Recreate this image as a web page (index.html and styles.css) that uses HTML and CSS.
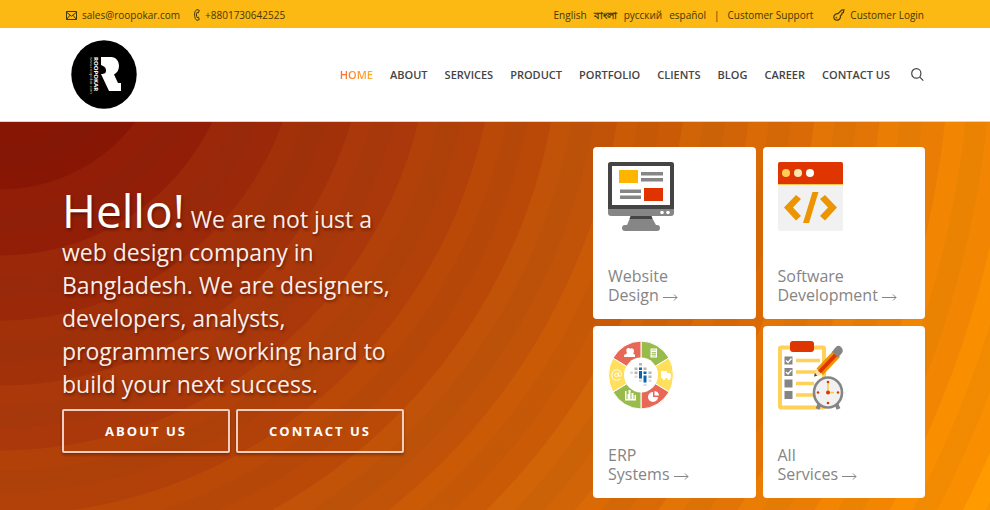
FILE: index.html
```html
<!DOCTYPE html>
<html lang="en">
<head>
<meta charset="utf-8">
<meta name="viewport" content="width=device-width, initial-scale=1">
<title>Roopokar</title>
<link rel="stylesheet" href="styles.css">
</head>
<body>
<div class="topbar">
  <div class="contacts">
    <a href="mailto:sales@roopokar.com">
      <svg width="11" height="9" viewBox="0 0 11 9" fill="none" stroke="currentColor"><path d="M.5.5h10v8H.5zM.5 1.200l5 4 5-4M.8 8.200l3.200-4M10.200 8.200 7 4.200"/></svg>
      sales@roopokar.com
    </a>
    <a href="tel:+8801730642525">
      <svg width="6" height="12" viewBox="0 0 6 12" fill="none" stroke="currentColor"><path d="M3 .6C1 1.400.5 3.500.6 6c.1 2.500.8 4.600 2.400 5.400l2.200-.7L4.600 8.200l-1.500.3C2.300 7 2.200 5 2.900 3.500l1.500.3L5.300 1.300z"/></svg>
      +8801730642525
    </a>
  </div>
  <div class="top-links">
    <div class="languages">
      <a href="#en">English</a>
      <a class="bengali" lang="bn" href="#bn">বাংলা</a>
      <a lang="ru" href="#ru">русский</a>
      <a lang="es" href="#es">español</a>
    </div>
    <span class="divider">|</span>
    <a href="#support">Customer Support</a>
    <a class="login" href="#login">
      <svg width="12" height="12" viewBox="0 0 12 12" fill="none" stroke="currentColor" stroke-width="1.200"><path d="M10.900.8 8.800 1 5 4.600C3.200 4.200.7 6 .8 8.300c.1 2 1.500 3 3.200 2.900 2.200-.1 3.900-2.300 3.400-4.300l1.500-1.700.2-1.300 1.300-.3zM2.800 9.200l1-1"/></svg>
      Customer Login
    </a>
  </div>
</div>

<header class="header">
  <a class="logo" href="#home" aria-label="Roopokar">
    <svg width="66" height="69" viewBox="0 0 66 69">
      <ellipse cx="33" cy="34.500" rx="32.700" ry="34.300" fill="#000"/>
      <path fill="#fff" d="M30 17h10c5 0 8 4 8 9 0 4-2 7-5 8.500L47 43h3v8H38l-8-17c4 0 5-1 5-3.500S34 27 32 26l-2-1z"/>
      <g transform="translate(22.500 17) rotate(90)"><text class="logo-name" x="0" y="0">ROOPOKAR</text><text class="logo-url" x="0" y="4">www.roopokar.com</text></g>
    </svg>
  </a>
  <nav class="nav">
    <a class="active" href="#home">HOME</a>
    <a href="#about">ABOUT</a>
    <a href="#services">SERVICES</a>
    <a href="#product">PRODUCT</a>
    <a href="#portfolio">PORTFOLIO</a>
    <a href="#clients">CLIENTS</a>
    <a href="#blog">BLOG</a>
    <a href="#career">CAREER</a>
    <a href="#contact">CONTACT US</a>
    <button class="search" type="button" aria-label="Search">
      <svg width="13" height="13" viewBox="0 0 13 13" fill="none" stroke="currentColor" stroke-width="1.200"><ellipse cx="5.300" cy="5.400" rx="4.600" ry="4.800"/><path d="m8.600 8.900 3.700 3.700"/></svg>
    </button>
  </nav>
</header>

<main class="hero">
  <section class="intro">
    <h1><span class="hello">Hello!</span> We are not just a<br>web design company in<br>Bangladesh. We are designers,<br>developers, analysts,<br>programmers working hard to<br>build your next success.</h1>
    <div class="actions">
      <a class="btn" href="#about">ABOUT US</a>
      <a class="btn" href="#contact">CONTACT US</a>
    </div>
  </section>

  <section class="cards">
    <a class="card" href="#web">
      <svg width="66" height="69" viewBox="0 0 66 69">
        <rect width="66" height="54" rx="3" fill="#868686"/><path d="M0 47V3q0-3 3-3h60q3 0 3 3v44z" fill="#444"/><path d="M4 4h58v39H4z" fill="#fff"/>
        <path d="M11 8h19v13H11z" fill="#ffb400"/><path d="M36 26h19v13H36z" fill="#e03400"/>
        <path d="M33 10h22v3.500H33zM33 16h22v3.500H33zM12 27.500h21V31H12zM12 33.500h21V37H12zM23 54h20l5 9h1q3 0 3 3t-3 3H17q-3 0-3-3t3-3h2z" fill="#868686"/><path d="M22.500 54h21l1 3h-23z" fill="#444"/>
        <circle cx="54" cy="50.500" r="1.800" fill="#fff"/><circle cx="60" cy="50.500" r="1.800" fill="#fff"/>
      </svg>
      <h2>Website<br>Design <span class="arrow"><svg width="15" height="8" viewBox="0 0 15 8" fill="none" stroke="currentColor"><path d="M0 4.500h14M11 1.500l3 3-3 3"/></svg></span></h2>
    </a>
    <a class="card" href="#software">
      <svg width="66" height="69" viewBox="0 0 66 69">
        <rect width="65" height="69" rx="2" fill="#f1f1f1"/><path d="M0 22V2q0-2 2-2h61q2 0 2 2v20z" fill="#df3500"/><path d="M0 22h65v1H0z" fill="#ffc64c"/>
        <circle cx="8" cy="11" r="4" fill="#ffcd56"/><circle cx="20" cy="11" r="4" fill="#ffe6af"/><circle cx="32" cy="11" r="4" fill="#fff"/>
        <path d="m18 33 5 4-8 8.500 8 8.500-5 4.500L6 45.500zM47 33l-5 4 8 8.500-8 8.500 5 4.500 12-13zM34.500 30h6L31 61h-6z" fill="#ec9500"/>
      </svg>
      <h2>Software<br>Development <span class="arrow"><svg width="15" height="8" viewBox="0 0 15 8" fill="none" stroke="currentColor"><path d="M0 4.500h14M11 1.500l3 3-3 3"/></svg></span></h2>
    </a>
    <a class="card" href="#erp">
      <svg width="66" height="69" viewBox="0 0 66 69">
        <g stroke="#fff" stroke-width="1">
          <path d="M33 34V0A33 34 0 0 1 61 17z" fill="#98bb4b"/><path d="M33 34 61 17a33 34 0 0 1 0 34z" fill="#ffdf5c"/><path d="M33 34 61 51A33 34 0 0 1 33 68z" fill="#e86857"/>
          <path d="M33 34v34A33 34 0 0 1 5 51z" fill="#98bb4b"/><path d="M33 34 5 51a33 34 0 0 1 0-34z" fill="#ffdf5c"/><path d="M33 34 5 17A33 34 0 0 1 33 0z" fill="#e86857"/>
        </g>
        <ellipse cx="33" cy="34" rx="17" ry="17.500" fill="#fff"/>
        <g fill="#fff"><path d="M16 16v-2l3.200-1.800C17.500 9.500 18.500 7 20.500 7q1 0 1.500.7c1.500-1.200 4-.4 4 2.300q0 1.500-.9 2.500l1.900 1.300V16z"/><path d="M42.500 7.500h6.500v9h-6.500zM53 30h6v7h-6zM59 32h3l1 2v3h-4zM17 50h1.500v8H28v1.500H17zM19.500 53h2v5h-2zM20.500 49h2v9h-2zM23.500 52h2v6h-2zM26.500 54h1.500v4h-1.500z"/><circle cx="56" cy="37.500" r="1.500"/><circle cx="61" cy="37.500" r="1.500"/><path d="M45 51v5h5a5 5 0 1 1-5-5zM46.500 50a5 5 0 0 1 4.500 4.500h-4.500z"/></g>
        <path d="M43.500 9h4.500M43.500 11.500h4.500M43.500 13.500h4.500M45 11v5M47 11v5" stroke="#98bb4b" stroke-width=".7"/>
        <g fill="none" stroke="#fff"><circle cx="8.500" cy="34" r="1.800"/><path d="M10.500 31.500v3.500q2.800 1 3-1.500C13 27 4 27.500 3.800 34c0 6 5.500 6 8.500 4"/></g>
        <g fill="#0c64ae"><path d="M31 26.500h3V29h-3zM31 30h3v7.500h-3zM35.500 30.500h3V33h-3zM35.500 34.500h3v7h-3z"/></g>
        <path d="M31 22h3v2.500h-3zM26.500 26.500h3V29h-3zM26.500 30.500h3V33h-3zM35.500 26.500h3V29h-3zM40.500 30.500h3V33h-3zM40.500 34.500h3V37h-3z" fill="#b5b5b5"/><path d="M22 30.500h3V33h-3zM26.500 34.500h3V37h-3zM31 38.500h3V41h-3zM40.500 38.500h3V41h-3zM35.500 43h3v2h-3z" fill="#ddd"/>
      </svg>
      <h2>ERP<br>Systems <span class="arrow"><svg width="15" height="8" viewBox="0 0 15 8" fill="none" stroke="currentColor"><path d="M0 4.500h14M11 1.500l3 3-3 3"/></svg></span></h2>
    </a>
    <a class="card" href="#all">
      <svg width="66" height="69" viewBox="0 0 66 69">
        <rect x="2" y="6.500" width="44" height="60" rx="1" fill="#fff" stroke="#ffd05a" stroke-width="4"/><rect x="12" y="0" width="24" height="11" rx="3" fill="#df3500"/>
        <path d="M6.500 15.500h8v8h-8zM6.500 27h8v8h-8zM6.500 38.500h8v8h-8zM6.500 50h8v8h-8z" fill="#858585"/><path d="m8 19.500 2 2 3.500-4M8 31l2 2 3.500-4" fill="none" stroke="#fff" stroke-width="1.400"/>
        <path d="M18 19.500h24M18 31h22M18 42.500h18M18 54h18" stroke="#ffd05a" stroke-width="3.500"/>
        <path d="m38.500 27.500 6.500 6.500-9 1.500z" fill="#ffe2a0"/><path d="m37 32 2.200 2.800L36 35.500z" fill="#444"/>
        <path d="m38.500 27.500 17-18L62 16 45 34z" fill="#ec9500"/><path d="m41.500 31 17-18" stroke="#df3500" stroke-width="4"/><path d="m54 11 3-4q3-4 6-1t1 6l-4 4.500z" fill="#858585"/>
        <path d="m42 62-2.500 6M58 62l2.500 6" stroke="#858585" stroke-width="4"/><ellipse cx="50" cy="51.500" rx="14" ry="15" fill="#f1f1f1" stroke="#858585" stroke-width="2.600"/><path d="M50 42v9.500h6" fill="none" stroke="#ffc64c" stroke-width="1.500"/>
        <g fill="#df3500"><circle cx="50" cy="51.500" r="2"/><circle cx="50" cy="41" r="1.300"/><circle cx="50" cy="62" r="1.300"/><circle cx="40" cy="51.500" r="1.200"/><circle cx="60" cy="51.500" r="1.200"/></g>
      </svg>
      <h2>All<br>Services <span class="arrow"><svg width="15" height="8" viewBox="0 0 15 8" fill="none" stroke="currentColor"><path d="M0 4.500h14M11 1.500l3 3-3 3"/></svg></span></h2>
    </a>
  </section>
</main>
</body>
</html>
```
FILE: styles.css
```css
* {
  box-sizing: border-box;
}

body {
  display: flex;
  flex-direction: column;
  min-height: 100vh;
  margin: 0;
  background: #fff;
  font-family: "Open Sans", "Noto Sans", sans-serif;
}

a {
  color: inherit;
  text-decoration: none;
}

svg {
  display: block;
  flex: none;
}

.topbar {
  display: flex;
  align-items: center;
  justify-content: space-between;
  height: 28px;
  padding: 2px 66px 0;
  background: #fcb813;
  color: #443709;
  font-size: 10px;
  line-height: 14px;
  white-space: nowrap;
}

.contacts,
.contacts a,
.top-links,
.languages,
.login {
  display: flex;
  align-items: center;
}

.contacts {
  gap: 14px;
}

.contacts a,
.login {
  gap: 5px;
}

.languages {
  gap: 7px;
}

.top-links {
  gap: 8px;
}

.bengali {
  font-weight: 600;
}

.login {
  margin-left: 12px;
}

.header {
  display: flex;
  align-items: center;
  justify-content: space-between;
  height: 94px;
  padding: 0 66px 0 71px;
  border-bottom: 1px solid #d9d5d5;
}

.logo-name {
  fill: #fff;
  font: bold 6px "Open Sans", sans-serif;
}

.logo-url {
  fill: #bbb;
  font: 4px "Open Sans", sans-serif;
}

.nav {
  display: flex;
  align-items: center;
  gap: 17px;
  color: #444;
  font-size: 11px;
  font-weight: 600;
  line-height: 14px;
  white-space: nowrap;
}

.active {
  background: linear-gradient(90deg, #ff6a2b, #ffb02b);
  background-clip: text;
  color: transparent;
}

.search {
  margin-left: 4px;
  padding: 0;
  border: 0;
  background: none;
  color: #444;
}

.hero {
  display: flex;
  flex: 1;
  align-items: flex-start;
  justify-content: space-between;
  padding: 25px 65px 12px 62px;
  background:
    repeating-radial-gradient(circle at 0 -102px, rgba(60, 50, 0, 0.04) 0 17px, transparent 18px 60px, rgba(60, 50, 0, 0.04) 61px 65px),
    radial-gradient(circle at 0 -102px,
      #871605 169px, #921e08 170px 235px, #9b2809 236px 300px,
      #a2310a 301px 365px, #aa380a 366px 430px, #b24109 431px 495px,
      #ba4908 496px 560px, #c15308 561px 625px, #cb5a07 626px 690px,
      #d26408 691px 755px, #da6a06 756px 820px, #e37506 821px 885px,
      #ea7e04 886px 950px, #f28602 951px 1015px, #f98e00 1016px 1080px,
      #ff9a00 1081px);
}

.intro {
  padding-top: 47px;
}

h1 {
  margin: 0;
  color: #fbeee8;
  font-size: 23px;
  font-weight: 400;
  line-height: 33px;
  text-shadow: 1px 2px 3px rgba(60, 10, 0, 0.6);
  white-space: nowrap;
}

.hello {
  color: #fff;
  font-size: 46px;
}

.actions {
  display: flex;
  gap: 6px;
  margin-top: 8px;
}

.btn {
  width: 168px;
  border: 2px solid #f0cfc0;
  border-radius: 2px;
  color: #fff;
  font-size: 13px;
  font-weight: 700;
  letter-spacing: 2px;
  line-height: 40px;
  text-align: center;
  box-shadow: 0 2px 3px rgba(60, 10, 0, 0.4);
}

.cards {
  display: grid;
  grid-template-columns: 1fr 1fr;
  gap: 7px;
  width: 332px;
}

.card {
  display: flex;
  flex-direction: column;
  justify-content: space-between;
  min-height: 172px;
  padding: 15px 15px 14px;
  border-radius: 4px;
  background: #fff;
  color: #858585;
}

h2 {
  margin: 0;
  font-size: 16px;
  font-weight: 400;
  line-height: 19px;
}

.arrow {
  display: inline-block;
}
```
